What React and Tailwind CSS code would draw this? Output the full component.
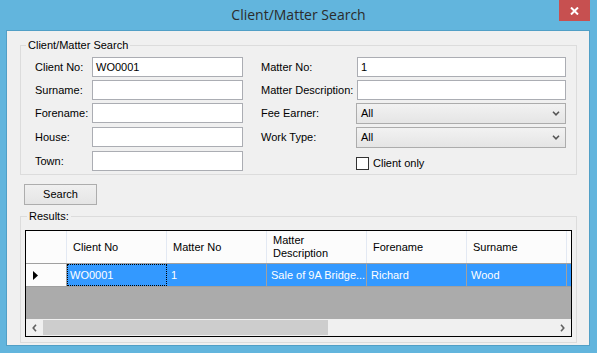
const leftRows = [
  { label: "Client No:", value: "WO0001", mt: "mt-0" },
  { label: "Surname:", value: "", mt: "mt-[3px]" },
  { label: "Forename:", value: "", mt: "mt-[3px]" },
  { label: "House:", value: "", mt: "mt-[4px]" },
  { label: "Town:", value: "", mt: "mt-[4px]" },
];

const columns = [
  { title: "Client No", value: "WO0001" },
  { title: "Matter No", value: "1" },
  { title: "Matter Description", value: "Sale of 9A Bridge..." },
  { title: "Forename", value: "Richard" },
  { title: "Surname", value: "Wood" },
];

function TextBox({ value, width }) {
  return (
    <div className={`${width} h-[20px] border border-[#abadb3] bg-white flex items-center pl-[3px] text-[11px] text-black`}>
      {value}
    </div>
  );
}

function Combo({ value }) {
  return (
    <div className="-ml-px w-[210px] h-[21px] border border-[#acacac] bg-linear-to-b from-[#f2f2f2] to-[#e5e5e5] flex items-center justify-between pl-[4px] pr-[5px] text-[11px] text-black">
      <span>{value}</span>
      <svg width="8" height="5" viewBox="0 0 8 5">
        <path d="M1 0.8 L4 3.8 L7 0.8" fill="none" stroke="#555" strokeWidth="1.6" />
      </svg>
    </div>
  );
}

function GroupLegend({ children, left }) {
  return (
    <span className={`absolute ${left} -top-[7px] px-[2px] bg-[#f0f0f0] text-[11px] leading-[13px] text-black`}>
      {children}
    </span>
  );
}

export default function App() {
  return (
    <div className="w-[597px] h-[353px] bg-[#62b5dd] flex flex-col font-['Liberation_Sans',Arial,sans-serif]">
      <div className="h-[30px] relative flex items-center justify-center pb-[1px]">
        <span className="font-['Open_Sans',sans-serif] text-[14px] text-[#2b2b2b]">Client/Matter Search</span>
        <div className="absolute right-[7px] top-0 w-[31px] h-[21px] bg-[#c75050] flex items-center justify-center">
          <svg width="9" height="8" viewBox="0 0 9 8">
            <path d="M1 0.5 L8 7.5 M8 0.5 L1 7.5" stroke="white" strokeWidth="2" />
          </svg>
        </div>
      </div>

      <div className="ml-[6px] mr-[7px] h-[316px] border border-[#519fc6] bg-[#f0f0f0] flex flex-col">
        {/* search criteria */}
        <div className="relative ml-[13px] mt-[14px] w-[557px] h-[130px] border border-[#dcdcdc] flex gap-[18px] pl-[14px] pt-[11px]">
          <GroupLegend left="left-[5px]">Client/Matter Search</GroupLegend>
          <div className="flex flex-col">
            {leftRows.map((r) => (
              <div key={r.label} className={`flex items-center ${r.mt}`}>
                <span className="w-[57px] text-[11px] text-black">{r.label}</span>
                <TextBox value={r.value} width="w-[151px]" />
              </div>
            ))}
          </div>
          <div className="flex flex-col">
            <div className="flex items-center">
              <span className="w-[96px] text-[11px] text-black">Matter No:</span>
              <TextBox value="1" width="w-[209px]" />
            </div>
            <div className="flex items-center mt-[3px]">
              <span className="w-[96px] text-[11px] text-black">Matter Description:</span>
              <TextBox value="" width="w-[209px]" />
            </div>
            <div className="flex items-center mt-[3px]">
              <span className="w-[96px] text-[11px] text-black">Fee Earner:</span>
              <Combo value="All" />
            </div>
            <div className="flex items-center mt-[3px]">
              <span className="w-[96px] text-[11px] text-black">Work Type:</span>
              <Combo value="All" />
            </div>
            <div className="flex items-center mt-[9px] -ml-px pl-[96px] gap-[4px]">
              <div className="w-[13px] h-[13px] border border-[#333] bg-white" />
              <span className="text-[11px] text-black leading-[13px]">Client only</span>
            </div>
          </div>
        </div>

        <button className="ml-[17px] mt-[9px] w-[73px] h-[21px] border border-[#adadad] bg-linear-to-b from-[#f0f0f0] to-[#e5e5e5] text-[11px] text-black">
          Search
        </button>

        {/* results */}
        <div className="relative ml-[13px] mt-[11px] w-[557px] h-[127px] border border-[#dcdcdc] pl-[4px] pt-[13px]">
          <GroupLegend left="left-[6px]">Results:</GroupLegend>
          <div className="w-[547px] h-[107px] border border-black bg-[#ababab] flex flex-col text-[11px]">
            <div className="h-[33px] flex bg-[#fcfcfc] border-b border-[#a0a0a0]">
              <div className="w-[41px] border-r border-[#e3e9f3]" />
              {columns.map((c) => (
                <div key={c.title} className="w-[100px] border-r border-[#e3e9f3] flex items-center pl-[6px] pr-[16px] leading-[13px] text-black">
                  {c.title}
                </div>
              ))}
              <div className="flex-1" />
            </div>
            <div className="h-[23px] flex border-b border-[#a0a0a0]">
              <div className="w-[41px] bg-[#fcfcfc] border-r border-[#a0a0a0] flex items-center pl-[7px]">
                <svg width="5" height="9" viewBox="0 0 5 9">
                  <polygon points="0,0 5,4.5 0,9" fill="black" />
                </svg>
              </div>
              {columns.map((c, i) =>
                i === 0 ? (
                  <div key={c.title} className="w-[100px] bg-[#3399ff] text-white">
                    <div className="h-full border border-dotted border-black flex items-center pl-[2px]">{c.value}</div>
                  </div>
                ) : (
                  <div key={c.title} className="w-[100px] bg-[#3399ff] text-white border-r border-[#a0a0a0] flex items-center pl-[4px] pr-[2px] overflow-hidden whitespace-nowrap">
                    {c.value}
                  </div>
                )
              )}
              <div className="flex-1 bg-[#3399ff]" />
            </div>
            <div className="flex-1" />
            <div className="h-[17px] flex bg-[#f0f0f0]">
              <div className="w-[17px] flex items-center justify-center">
                <svg width="5" height="8" viewBox="0 0 5 8">
                  <path d="M4 0.8 L1.2 4 L4 7.2" fill="none" stroke="#606060" strokeWidth="1.6" />
                </svg>
              </div>
              <div className="w-[285px] my-px bg-[#cdcdcd]" />
              <div className="flex-1" />
              <div className="w-[17px] flex items-center justify-center">
                <svg width="5" height="8" viewBox="0 0 5 8">
                  <path d="M1 0.8 L3.8 4 L1 7.2" fill="none" stroke="#606060" strokeWidth="1.6" />
                </svg>
              </div>
            </div>
          </div>
        </div>
      </div>
    </div>
  );
}
